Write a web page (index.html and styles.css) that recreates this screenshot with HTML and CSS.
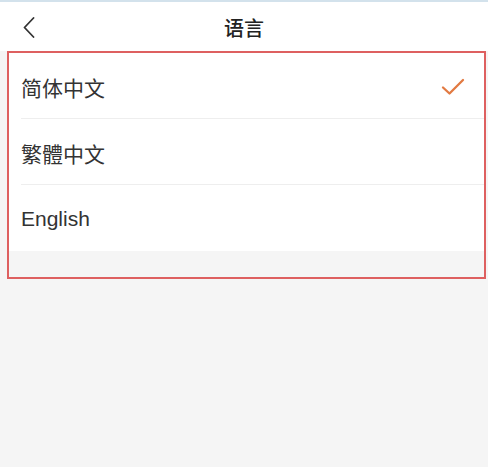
FILE: index.html
```html
<!DOCTYPE html>
<html lang="zh-CN">
<head>
<meta charset="utf-8">
<title>语言</title>
<link rel="stylesheet" href="styles.css">
</head>
<body>
<div class="page">
  <header class="topbar">
    <span class="back" aria-label="返回">
      <svg width="12" height="21" viewBox="0 0 12 21"><path d="M10.5 1 L1.5 10.5 L10.5 20" fill="none" stroke="#333" stroke-width="1.8" stroke-linecap="round" stroke-linejoin="round"/></svg>
    </span>
    <h1 class="title">语言</h1>
  </header>
  <section class="panel">
    <ul class="list">
      <li class="item"><span class="label">简体中文</span>
        <svg class="check" width="24" height="18" viewBox="0 0 24 18"><path d="M2 9.5 L8.5 15.5 L22 2" fill="none" stroke="#e27a42" stroke-width="2.3" stroke-linecap="round" stroke-linejoin="round"/></svg>
      </li>
      <li class="item"><span class="label">繁體中文</span></li>
      <li class="item last"><span class="label">English</span></li>
    </ul>
  </section>
</div>
</body>
</html>
```
FILE: styles.css
```css
html, body {
  margin: 0;
  padding: 0;
}
body {
  background: #f5f5f5;
  font-family: "Liberation Sans", "Noto Sans CJK SC", sans-serif;
  color: #333;
}
.page {
  width: 488px;
  min-height: 467px;
  background: #f5f5f5;
}
.topbar {
  position: relative;
  height: 49px;
  background: #fff;
  border-top: 2px solid #d3e2ec;
  display: flex;
  align-items: center;
  justify-content: center;
}
.back {
  position: absolute;
  left: 23px;
  top: 15px;
  display: flex;
}
.title {
  margin: 0;
  font-family: "Noto Sans CJK SC", sans-serif;
  font-size: 20px;
  font-weight: 500;
  color: #222;
  line-height: 1;
  margin-top: 2px;
}
.panel {
  margin: 0 2px 0 7px;
  border-width: 2px;
  border-style: solid;
  border-color: #de6060;
  padding-bottom: 26px;
  background: #f5f5f5;
}
.list {
  list-style: none;
  margin: 0;
  padding: 0 0 0 12px;
  background: #fff;
}
.item {
  height: 66px;
  display: flex;
  align-items: center;
  justify-content: space-between;
  padding-right: 19px;
  border-bottom: 1px solid #eeeeee;
  box-sizing: border-box;
}
.item.last {
  border-bottom: none;
}
.label {
  font-size: 21px;
  color: #333;
  font-family: "Liberation Sans", "Noto Sans CJK SC", sans-serif;
  margin-top: 2px;
}
.check {
  margin-top: 3px;
}
```
